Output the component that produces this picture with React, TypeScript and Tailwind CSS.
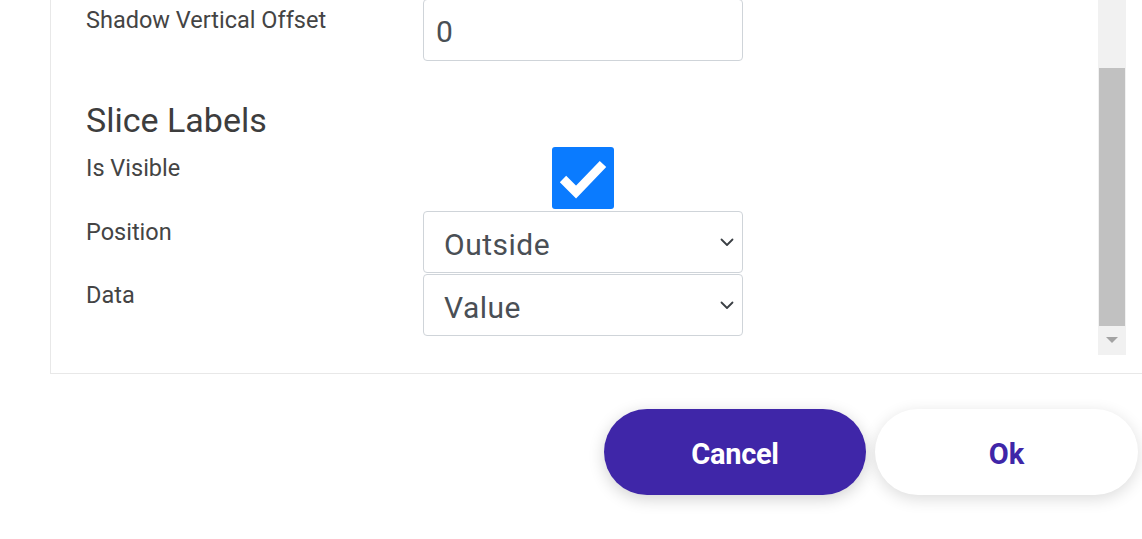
import React from "react";

const Chevron = () => (
  <svg width="14" height="9" viewBox="0 0 14 9" className="shrink-0">
    <polyline points="1.5,1.5 7,7 12.5,1.5" fill="none" stroke="#3a3f44" strokeWidth="1.8" strokeLinecap="round" strokeLinejoin="round" />
  </svg>
);

const Label = ({ children }: { children: React.ReactNode }) => (
  <div className="w-[337px] shrink-0 pt-[3px] text-[23.5px] leading-[36px] text-[#444444]">{children}</div>
);

const Select = ({ value }: { value: string }) => (
  <div className="w-[320px] h-[62px] border border-[#cfd4d9] rounded-[4px] flex items-center justify-between pl-[20px] pr-[8px] bg-white">
    <span className="pt-[4px] text-[30px] text-[#4a4f55] tracking-[0.5px]">{value}</span>
    <Chevron />
  </div>
);

export default function App() {
  return (
    <div className="w-[1142px] h-[539px] bg-white overflow-hidden" style={{ fontFamily: "Roboto, 'Noto Sans', sans-serif" }}>
      <div className="ml-[50px] h-[374px] border-l border-b border-[#e8e8e8] flex pr-[16px] pb-[19px]">
        <div className="flex-1 pl-[35px] overflow-hidden">
          <div className="-mt-[1px] flex items-start">
            <Label>Shadow Vertical Offset</Label>
            <div className="w-[320px] h-[62px] border border-[#cfd4d9] rounded-[4px] flex items-center pl-[12px]">
              <span className="pt-[2px] text-[30px] text-[#4a4f55]">0</span>
            </div>
          </div>
          <div className="mt-[39px] text-[34px] leading-[40px] text-[#3d3d3d]">Slice Labels</div>
          <div className="mt-[7px] flex items-start">
            <Label>Is Visible</Label>
            <div className="w-[320px] h-[62px] flex justify-center">
              <div className="w-[62px] h-[62px] rounded-[3px] bg-[#0a7bff] flex items-center justify-center">
                <svg width="62" height="62" viewBox="0 0 62 62">
                  <path d="M11 32 L24 45 L51 17" fill="none" stroke="white" strokeWidth="9" strokeLinejoin="miter" />
                </svg>
              </div>
            </div>
          </div>
          <div className="mt-[2px] flex items-start">
            <Label>Position</Label>
            <Select value="Outside" />
          </div>
          <div className="mt-[1px] flex items-start">
            <Label>Data</Label>
            <Select value="Value" />
          </div>
        </div>
        <div className="w-[28px] h-[355px] bg-[#f1f1f1] flex flex-col items-center pt-[68px]">
          <div className="w-[26px] h-[258px] bg-[#c1c1c1]" />
          <div className="flex-1 flex items-center justify-center">
            <svg width="12" height="7" viewBox="0 0 12 7">
              <polygon points="0,0 12,0 6,6" fill="#a3a3a3" />
            </svg>
          </div>
        </div>
      </div>
      <div className="mt-[35px] flex justify-end gap-[9px] pr-[4px]">
        <button className="w-[262px] h-[86px] pt-[5px] rounded-full bg-[#3f26a8] text-white text-[29px] font-bold shadow-[0_4px_16px_rgba(0,0,0,0.18)] tracking-[-0.3px]">
          Cancel
        </button>
        <button className="w-[263px] h-[86px] pt-[5px] rounded-full bg-white text-[#3f26a8] text-[29px] font-bold shadow-[0_4px_16px_rgba(0,0,0,0.14)]">
          Ok
        </button>
      </div>
    </div>
  );
}
